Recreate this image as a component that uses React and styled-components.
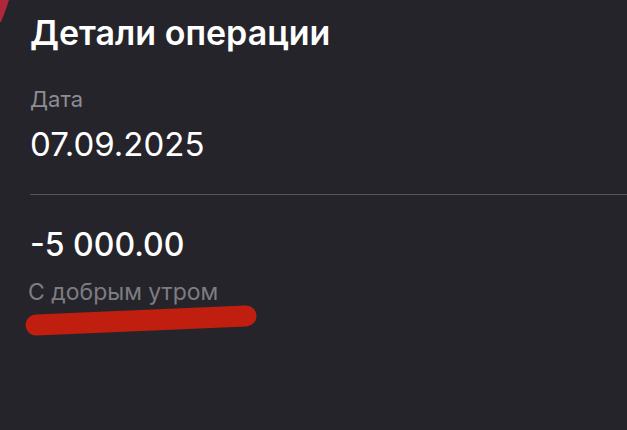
import styled, { createGlobalStyle } from "styled-components";

const Global = createGlobalStyle`
  html, body {
    margin: 0;
    padding: 0;
    background: #25242b;
  }
  body {
    font-family: Inter, "Noto Sans", sans-serif;
    -webkit-font-smoothing: antialiased;
  }
`;

const Screen = styled.div`
  position: relative;
  width: 627px;
  height: 430px;
  overflow: hidden;
  background: #25242b;
  padding: 12px 0 0 30px;
  box-sizing: border-box;
`;

const Corner = styled.svg`
  position: absolute;
  left: 0;
  top: 0;
`;

const Title = styled.h1`
  margin: 0;
  font-size: 34px;
  font-weight: 600;
  color: #ffffff;
  line-height: 42px;
`;

const Field = styled.div`
  display: flex;
  flex-direction: column;
  margin-top: ${(p) => p.$top || 0}px;
`;

const Label = styled.div`
  font-size: 22px;
  color: #8d8c92;
  line-height: 26px;
`;

const Value = styled.div`
  font-size: ${(p) => (p.$strong ? 32 : 33)}px;
  font-weight: ${(p) => (p.$strong ? 500 : 400)};
  color: #ffffff;
  line-height: 38px;
  margin-top: ${(p) => p.$top || 0}px;
`;

const Divider = styled.hr`
  margin: 31px 0 0;
  border: none;
  height: 1px;
  background: #55545a;
`;

const Note = styled.div`
  font-size: 23px;
  color: #7d7c82;
  line-height: 28px;
  margin-top: 14px;
  margin-left: -2px;
`;

const Scribble = styled.svg`
  display: block;
  margin-left: -6px;
  margin-top: -3px;
`;

export default function App() {
  return (
    <>
      <Global />
      <Screen>
        <Corner width="12" height="24" viewBox="0 0 12 24">
          <path d="M0 0 L9 0 Q6 10 1 22 L0 22 Z" fill="#b0263a" />
        </Corner>
        <Title>Детали операции</Title>
        <Field $top={32}>
          <Label>Дата</Label>
          <Value $top={13}>07.09.2025</Value>
        </Field>
        <Divider />
        <Field $top={31}>
          <Value $strong>-5 000.00</Value>
          <Note>С добрым утром</Note>
        </Field>
        <Scribble width="234" height="34" viewBox="0 0 234 34">
          <path
            d="M12 22 C 60 20, 140 16, 222 13"
            stroke="#c01f0f"
            strokeWidth="21"
            strokeLinecap="round"
            fill="none"
          />
        </Scribble>
      </Screen>
    </>
  );
}
